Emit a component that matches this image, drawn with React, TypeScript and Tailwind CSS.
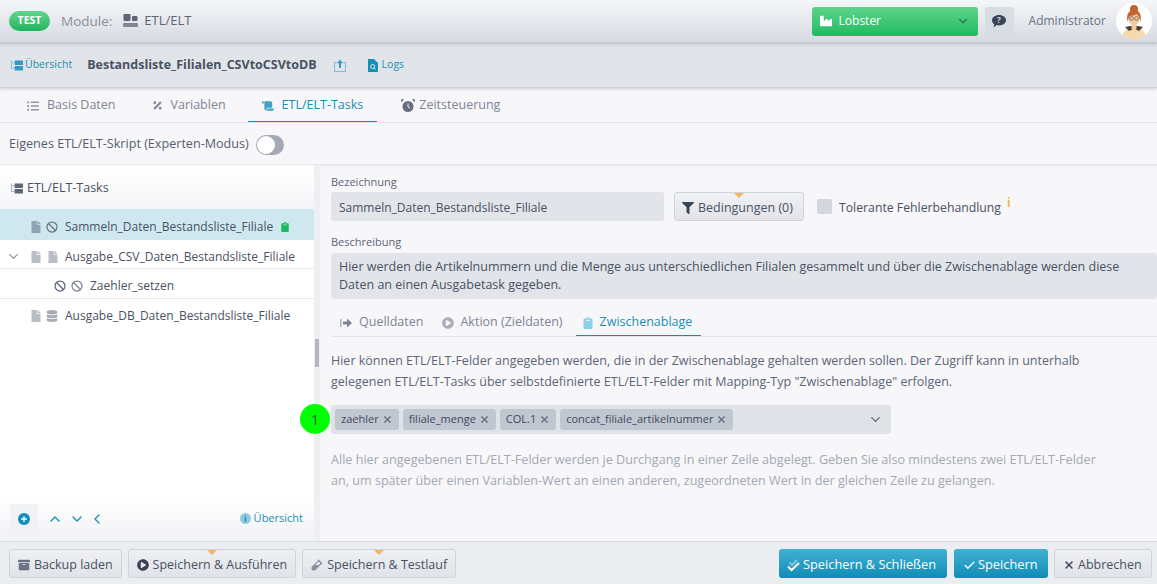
import { ChevronDown, ChevronLeft, ChevronUp, Check, X, Ban, Plus } from "lucide-react";
import { FaFilter, FaFile, FaDatabase, FaClipboard, FaArchive, FaPlayCircle, FaIndustry, FaListUl, FaPercentage, FaScroll, FaVial } from "react-icons/fa";

function Avatar() {
  return (
    <svg width="36" height="36" viewBox="0 0 36 36" className="rounded-full bg-white">
      <path d="M6 36c0-8 5-11 12-11s12 3 12 11z" fill="#f6d9a8" />
      <path d="M9 24c3-1.500 15-1.500 18 0l-4 4-5-2.500-5 2.500z" fill="#4a4038" />
      <rect x="15.500" y="20" width="5" height="6" fill="#f3c9a0" />
      <ellipse cx="18" cy="15" rx="6" ry="7" fill="#f3c9a0" />
      <path d="M11.500 19c-1.500-9 2-12 6.500-12s8 3 6.500 12c-.5-4-2-7-4-8-2 1.500-5 1.500-6.500 2-.8 1-2 3-2.500 6z" fill="#c4632f" />
      <circle cx="18" cy="6" r="4" fill="#c4632f" />
      <circle cx="15.500" cy="15.500" r="1.800" fill="none" stroke="#5c5348" strokeWidth=".7" />
      <circle cx="20.500" cy="15.500" r="1.800" fill="none" stroke="#5c5348" strokeWidth=".7" />
    </svg>
  );
}

function TreeIcon({ className }: { className: string }) {
  return (
    <svg width="13" height="11" viewBox="0 0 14 11" className={className} fill="currentColor">
      <path d="M1 0h1v8h3v1H1z" opacity=".55" />
      <path d="M2 2h3v1H2z" opacity=".55" />
      <rect x="5" y="0" width="9" height="5" rx=".5" />
      <rect x="5" y="6" width="9" height="5" rx=".5" />
    </svg>
  );
}

function ModuleIcon() {
  return (
    <svg width="15" height="14" viewBox="0 0 15 14" className="text-[#5d6577]" fill="currentColor">
      <rect x="0.500" y="0" width="7" height="7" rx="1" />
      <rect x="9" y="2" width="5.500" height="5" rx="1" />
      <path d="M1 9h13a1 1 0 0 1 1 1v2a1 1 0 0 1-1 1H1a1 1 0 0 1-1-1v-2a1 1 0 0 1 1-1z" opacity=".75" />
    </svg>
  );
}

function UploadIcon() {
  return (
    <svg width="14" height="13" viewBox="0 0 14 13" className="text-[#2d9cc4]" fill="none" stroke="currentColor">
      <path d="M3.500 3.500H1.500v9h11v-9h-2" strokeOpacity=".55" />
      <path d="M7 9V2" strokeWidth="2" />
      <path d="M3.800 4.200 7 .8l3.200 3.400z" fill="currentColor" stroke="none" />
    </svg>
  );
}

function LogIcon() {
  return (
    <svg width="10" height="13" viewBox="0 0 10 13" className="text-[#1a8fb5]" fill="currentColor">
      <path d="M0 0h6l4 4v9H0z" />
      <circle cx="4.700" cy="7.500" r="2" fill="none" stroke="#e1e5e9" />
      <path d="m6 9 1.600 1.600" stroke="#e1e5e9" />
    </svg>
  );
}

function AlarmIcon() {
  return (
    <svg width="14" height="14" viewBox="0 0 14 14" className="text-[#666d7e]" fill="currentColor">
      <circle cx="7" cy="7.500" r="5.500" />
      <path d="M0 3.200 3 .6a2 2 0 0 0-3 2.600zM14 3.200 11 .6a2 2 0 0 1 3 2.600z" />
      <path d="M7 4.500v3.300l2 1.200" fill="none" stroke="#f7f7f9" />
    </svg>
  );
}

function SignInIcon() {
  return (
    <svg width="12" height="10" viewBox="0 0 12 10" className="text-[#7d8494]" fill="currentColor">
      <path d="M0 1h1.500v8H0z" opacity=".6" />
      <path d="M3 3.500h4V.5L12 5 7 9.500v-3H3z" />
    </svg>
  );
}

function HelpBubble() {
  return (
    <svg width="14" height="13" viewBox="0 0 14 13">
      <path d="M7 0c3.900 0 7 2.300 7 5.200s-3.100 5.200-7 5.200c-.8 0-1.500-.1-2.200-.3C3.800 11.200 2.300 12.300.8 12.500c.9-.8 1.500-2 1.500-3.100C.9 8.400 0 6.900 0 5.200 0 2.300 3.100 0 7 0z" fill="#3b4356" />
      <text x="7" y="8.200" textAnchor="middle" fontSize="8" fontWeight="700" fill="#d8dce3" fontFamily="Open Sans, sans-serif">?</text>
    </svg>
  );
}

function DoubleCheck() {
  return (
    <svg width="13" height="13" viewBox="0 0 13 13" fill="none" stroke="white" strokeWidth="2">
      <path d="M2.500 3.500 5 6l5-5" strokeOpacity=".4" />
      <path d="M1 7.500 4.500 11 12 4" />
    </svg>
  );
}

function Tab({ icon, label, active, className }: { icon: React.ReactNode; label: string; active?: boolean; className: string }) {
  return (
    <div className={`flex h-full items-center border-b ${className} ${active ? "border-[#0f8fb8] text-[#1a8fb5]" : "border-transparent text-[#7d8494]"}`}>
      {icon}
      <span>{label}</span>
    </div>
  );
}

function Notch() {
  return <span className="absolute top-0 left-1/2 h-0 w-0 -translate-x-1/2 border-x-[5px] border-t-[5px] border-x-transparent border-t-[#f2b75c]" />;
}

function FootBtn({ icon, label, notch }: { icon: React.ReactNode; label: string; notch?: boolean }) {
  return (
    <button className="relative flex h-[29px] items-center gap-[4px] rounded-[3px] border border-[#cfd3db] bg-gradient-to-b from-[#eef0f3] to-[#dfe2e8] px-[8px] pt-[3px] text-[#4a5163]">
      {notch && <Notch />}
      {icon}
      {label}
    </button>
  );
}

function TreeRow({ children, selected, border, className }: { children: React.ReactNode; selected?: boolean; border?: boolean; className: string }) {
  return (
    <div className={`flex items-center text-[12px] text-[#4a5163] ${className} ${selected ? "bg-[#cfe7ef]" : ""} ${border ? "border-b border-[#e6e8ec]" : ""}`}>
      {children}
    </div>
  );
}

function Chip({ label }: { label: string }) {
  return (
    <span className="flex h-[21px] items-center gap-[3px] rounded-[3px] bg-[#c0c7d1] px-[6px] text-[11px] text-[#424a5c]">
      {label}
      <X size={11} strokeWidth={2.500} className="text-[#5f6779]" />
    </span>
  );
}

export default function App() {
  return (
    <div className="flex h-[584px] w-[1157px] flex-col overflow-hidden bg-[#f7f7f9] text-[12.500px] text-[#4a5163] [font-family:'Open_Sans',sans-serif]">
      <header className="relative z-20 flex h-[43px] shrink-0 items-center border-b border-[#c3c8d2] bg-gradient-to-b from-[#f5f6f8] to-[#d6dae2] pr-[5px] pl-[9px] shadow-[0_1px_3px_rgba(80,90,110,0.3)]">
        <span className="flex h-5 w-[41px] items-center justify-center rounded-full bg-gradient-to-b from-[#5fd68e] to-[#1fb45f] text-[10.500px] font-bold text-white">TEST</span>
        <span className="ml-[11px] text-[13.500px] text-[#8a909e]">Module:</span>
        <span className="ml-[11px]"><ModuleIcon /></span>
        <span className="ml-[6px] text-[13px] text-[#5d6577]">ETL/ELT</span>
        <div className="ml-auto flex h-[29px] w-[166px] items-center rounded-[3px] bg-gradient-to-b from-[#5ad48a] to-[#17bb60] px-[8px] text-[12px] text-white">
          <FaIndustry size={12} />
          <span className="ml-[7px]">Lobster</span>
          <ChevronDown size={14} className="ml-auto text-[#2f6e5a]" />
        </div>
        <div className="ml-[7px] flex h-[29px] w-[29px] items-center justify-center rounded-[3px] bg-[#d8dce3]">
          <HelpBubble />
        </div>
        <span className="ml-[15px] text-[12px] text-[#6b7285]">Administrator</span>
        <span className="ml-[10px]"><Avatar /></span>
      </header>

      <div className="relative z-10 flex h-[45px] shrink-0 items-center border-b border-[#ccd0d8] bg-[#e1e5e9] pl-[10px] shadow-[0_1px_3px_rgba(80,90,110,0.25)]">
        <TreeIcon className="text-[#2d9cc4]" />
        <span className="ml-[2px] text-[10.500px] text-[#1a8fb5]">Übersicht</span>
        <span className="ml-[15px] text-[12.500px] font-bold text-[#4a5163]">Bestandsliste_Filialen_CSVtoCSVtoDB</span>
        <span className="ml-[16px]"><UploadIcon /></span>
        <span className="ml-[21px]"><LogIcon /></span>
        <span className="ml-[4px] text-[10.500px] text-[#1a8fb5]">Logs</span>
      </div>

      <nav className="flex h-[35px] shrink-0 items-stretch gap-[8px] border-b border-[#e4e6ea] pl-[13px]">
        <Tab className="gap-[8px] px-[14px] pt-[2px]" icon={<FaListUl size={12} className="text-[#9298a6]" />} label="Basis Daten" />
        <Tab className="gap-[8px] px-[14px] pt-[2px]" icon={<FaPercentage size={11} className="text-[#7d8494]" />} label="Variablen" />
        <Tab active className="gap-[8px] px-[14px] pt-[2px]" icon={<FaScroll size={12} className="text-[#3fa3c7]" />} label="ETL/ELT-Tasks" />
        <Tab className="gap-[4px] pt-[2px] pr-[14px] pl-[16px]" icon={<AlarmIcon />} label="Zeitsteuerung" />
      </nav>

      <div className="flex h-[42px] shrink-0 items-center gap-[7px] border-b border-[#e4e6ea] pt-[2px] pl-[9px] text-[12.600px] text-[#565d6f] shadow-[0_1px_2px_rgba(80,90,110,0.1)]">
        Eigenes ETL/ELT-Skript (Experten-Modus)
        <span className="flex h-5 w-7 items-center rounded-full bg-[#a3a9b5] pl-[1px]">
          <span className="h-[18px] w-[18px] rounded-full bg-white" />
        </span>
      </div>

      <main className="flex min-h-0 flex-1">
        <aside className="flex w-[314px] shrink-0 flex-col bg-white">
          <div className="flex h-[44px] shrink-0 items-center gap-[4px] bg-gradient-to-b from-[#fff] to-[#f4f5f7] pt-[2px] pl-[10px]">
            <TreeIcon className="text-[#5d6577]" />
            ETL/ELT-Tasks
          </div>
          <TreeRow selected className="h-[31px] pt-[4px]">
            <FaFile size={12} className="ml-[30px] text-[#8fa3b2]" />
            <Ban size={12} strokeWidth={2.500} className="ml-[4px] text-[#6b7285]" />
            <span className="ml-[7px]">Sammeln_Daten_Bestandsliste_Filiale</span>
            <FaClipboard size={10} className="ml-[7px] text-[#17bb60]" />
          </TreeRow>
          <TreeRow border className="h-[29px] pt-[5px]">
            <ChevronDown size={15} className="ml-[6px] text-[#8a909e]" />
            <FaFile size={12} className="ml-[9px] text-[#b9bdc6]" />
            <FaFile size={12} className="ml-[5px] text-[#b9bdc6]" />
            <span className="ml-[6px]">Ausgabe_CSV_Daten_Bestandsliste_Filiale</span>
          </TreeRow>
          <TreeRow border className="h-[30px] pt-[4px]">
            <Ban size={12} strokeWidth={2.500} className="ml-[54px] text-[#5d6577]" />
            <Ban size={12} strokeWidth={2.500} className="ml-[5px] text-[#7d8494]" />
            <span className="ml-[7px]">Zaehler_setzen</span>
          </TreeRow>
          <TreeRow className="h-[31px] pt-[3px]">
            <FaFile size={12} className="ml-[30px] text-[#b9bdc6]" />
            <FaDatabase size={12} className="ml-[4px] text-[#a5a9b3]" />
            <span className="ml-[7px]">Ausgabe_DB_Daten_Bestandsliste_Filiale</span>
          </TreeRow>
          <div className="mt-auto flex h-[45px] shrink-0 items-center bg-gradient-to-b from-[#fff] to-[#f1f2f5] pr-[11px] pl-[10px] text-[11px] text-[#1a8fb5]">
            <span className="flex h-[29px] w-[28px] items-center justify-center rounded-[3px] bg-[#f1f2f5]">
              <span className="flex h-3 w-3 items-center justify-center rounded-full bg-[#0f8fb8]">
                <Plus size={8} strokeWidth={4} className="text-white" />
              </span>
            </span>
            <ChevronUp size={16} className="ml-[9px]" />
            <ChevronDown size={16} className="ml-[6px]" />
            <ChevronLeft size={16} className="ml-[4px]" />
            <span className="ml-auto flex h-[11px] w-[11px] items-center justify-center rounded-full bg-[#8ecbe0] text-[8px] leading-none font-bold text-[#1a7fa3]">i</span>
            <span className="ml-[3px]">Übersicht</span>
          </div>
        </aside>

        <div className="relative w-[6px] shrink-0 bg-[#eeeff2]">
          <span className="absolute top-[174px] left-[1px] h-[28px] w-[4px] bg-[#b3b7c0]" />
        </div>

        <section className="min-w-0 flex-1 pt-[9px] pl-[11px]">
          <div className="text-[11px] leading-[15px] text-[#5d6577]">Bezeichnung</div>
          <div className="mt-[3px] flex items-center">
            <div className="flex h-[29px] w-[333px] items-center rounded-[3px] bg-[#e1e4e9] pt-[3px] pl-[8px] text-[12px]">Sammeln_Daten_Bestandsliste_Filiale</div>
            <button className="relative ml-[10px] flex h-[29px] w-[130px] items-center gap-[4px] rounded-[3px] border border-[#cfd3db] bg-gradient-to-b from-[#f0f1f4] to-[#e2e4e9] pt-[3px] pl-[7px]">
              <Notch />
              <FaFilter size={12} className="text-[#3b4356]" />
              Bedingungen (0)
            </button>
            <span className="ml-[13px] h-[15px] w-[15px] rounded-[2px] bg-[#d3d6dc]" />
            <span className="mt-[4px] ml-[7px] text-[12.250px]">Tolerante Fehlerbehandlung</span>
            <span className="mb-[8px] ml-[6px] text-[12px] font-bold text-[#f0b840]">i</span>
          </div>
          <div className="mt-[13px] text-[11px] leading-[15px] text-[#5d6577]">Beschreibung</div>
          <div className="mt-[4px] h-[46px] w-[826px] rounded-[3px] bg-[#e1e4e9] px-[8px] py-[5px] leading-[18px]">
            Hier werden die Artikelnummern und die Menge aus unterschiedlichen Filialen gesammelt und über die Zwischenablage werden diese Daten an einen Ausgabetask gegeben.
          </div>
          <div className="mt-[6px] flex h-[32px] items-stretch gap-[6px] border-b border-[#e4e6ea]">
            <Tab className="gap-[7px] pt-[5px] pr-[6px] pl-[9px]" icon={<SignInIcon />} label="Quelldaten" />
            <Tab className="gap-[6px] pt-[5px] pr-[7px] pl-[7px]" icon={<FaPlayCircle size={12} className="text-[#a9adb7]" />} label="Aktion (Zieldaten)" />
            <Tab active className="gap-[6px] pt-[5px] pr-[9px] pl-[6px]" icon={<FaClipboard size={12} className="text-[#8ed0e4]" />} label="Zwischenablage" />
          </div>
          <p className="mt-[13px] w-[780px] leading-[21px] text-[#5d6577]">
            Hier können ETL/ELT-Felder angegeben werden, die in der Zwischenablage gehalten werden sollen. Der Zugriff kann in unterhalb gelegenen ETL/ELT-Tasks über selbstdefinierte ETL/ELT-Felder mit Mapping-Typ "Zwischenablage" erfolgen.
          </p>
          <div className="relative mt-[13px] flex h-[29px] w-[560px] items-center gap-[4px] rounded-[3px] bg-[#dfe2e7] pr-[8px] pl-[4px]">
            <span className="absolute top-[-1px] left-[-31px] flex h-[30px] w-[30px] items-center justify-center rounded-full bg-[#00ff00] text-[15px] text-[#3d5c3d]">1</span>
            <Chip label="zaehler" />
            <Chip label="filiale_menge" />
            <Chip label="COL.1" />
            <Chip label="concat_filiale_artikelnummer" />
            <ChevronDown size={15} className="ml-auto text-[#5d6577]" />
          </div>
          <p className="mt-[15px] w-[780px] text-[12.600px] leading-[21px] text-[#a3a8b3]">
            Alle hier angegebenen ETL/ELT-Felder werden je Durchgang in einer Zeile abgelegt. Geben Sie also mindestens zwei ETL/ELT-Felder an, um später über einen Variablen-Wert an einen anderen, zugeordneten Wert in der gleichen Zeile zu gelangen.
          </p>
        </section>
      </main>

      <footer className="flex h-[43px] shrink-0 items-center gap-[6px] border-t border-[#d9dbe1] bg-[#ecedf1] pt-[1px] pr-[5px] pl-[9px]">
        <FootBtn icon={<FaArchive size={12} className="text-[#6b7285]" />} label="Backup laden" />
        <FootBtn notch icon={<FaPlayCircle size={12} className="text-[#3b4356]" />} label="Speichern & Ausführen" />
        <FootBtn notch icon={<FaVial size={12} className="text-[#8a909e]" />} label="Speichern & Testlauf" />
        <button className="ml-auto flex h-[29px] w-[168px] items-center gap-[3px] rounded-[3px] bg-gradient-to-b from-[#3fb0d3] to-[#0a8db6] pt-[3px] pl-[8px] text-[12.800px] text-white">
          <DoubleCheck />
          Speichern & Schließen
        </button>
        <button className="ml-px flex h-[29px] w-[94px] items-center gap-[2px] rounded-[3px] bg-gradient-to-b from-[#3fb0d3] to-[#0a8db6] pt-[3px] pl-[9px] text-[12.800px] text-white">
          <Check size={13} strokeWidth={2.500} />
          Speichern
        </button>
        <button className="flex h-[29px] w-[98px] items-center gap-[3px] rounded-[3px] border border-[#cfd3db] bg-gradient-to-b from-[#eef0f3] to-[#dfe2e8] pt-[3px] pl-[8px]">
          <X size={12} strokeWidth={3} className="text-[#3b4356]" />
          Abbrechen
        </button>
      </footer>
    </div>
  );
}
